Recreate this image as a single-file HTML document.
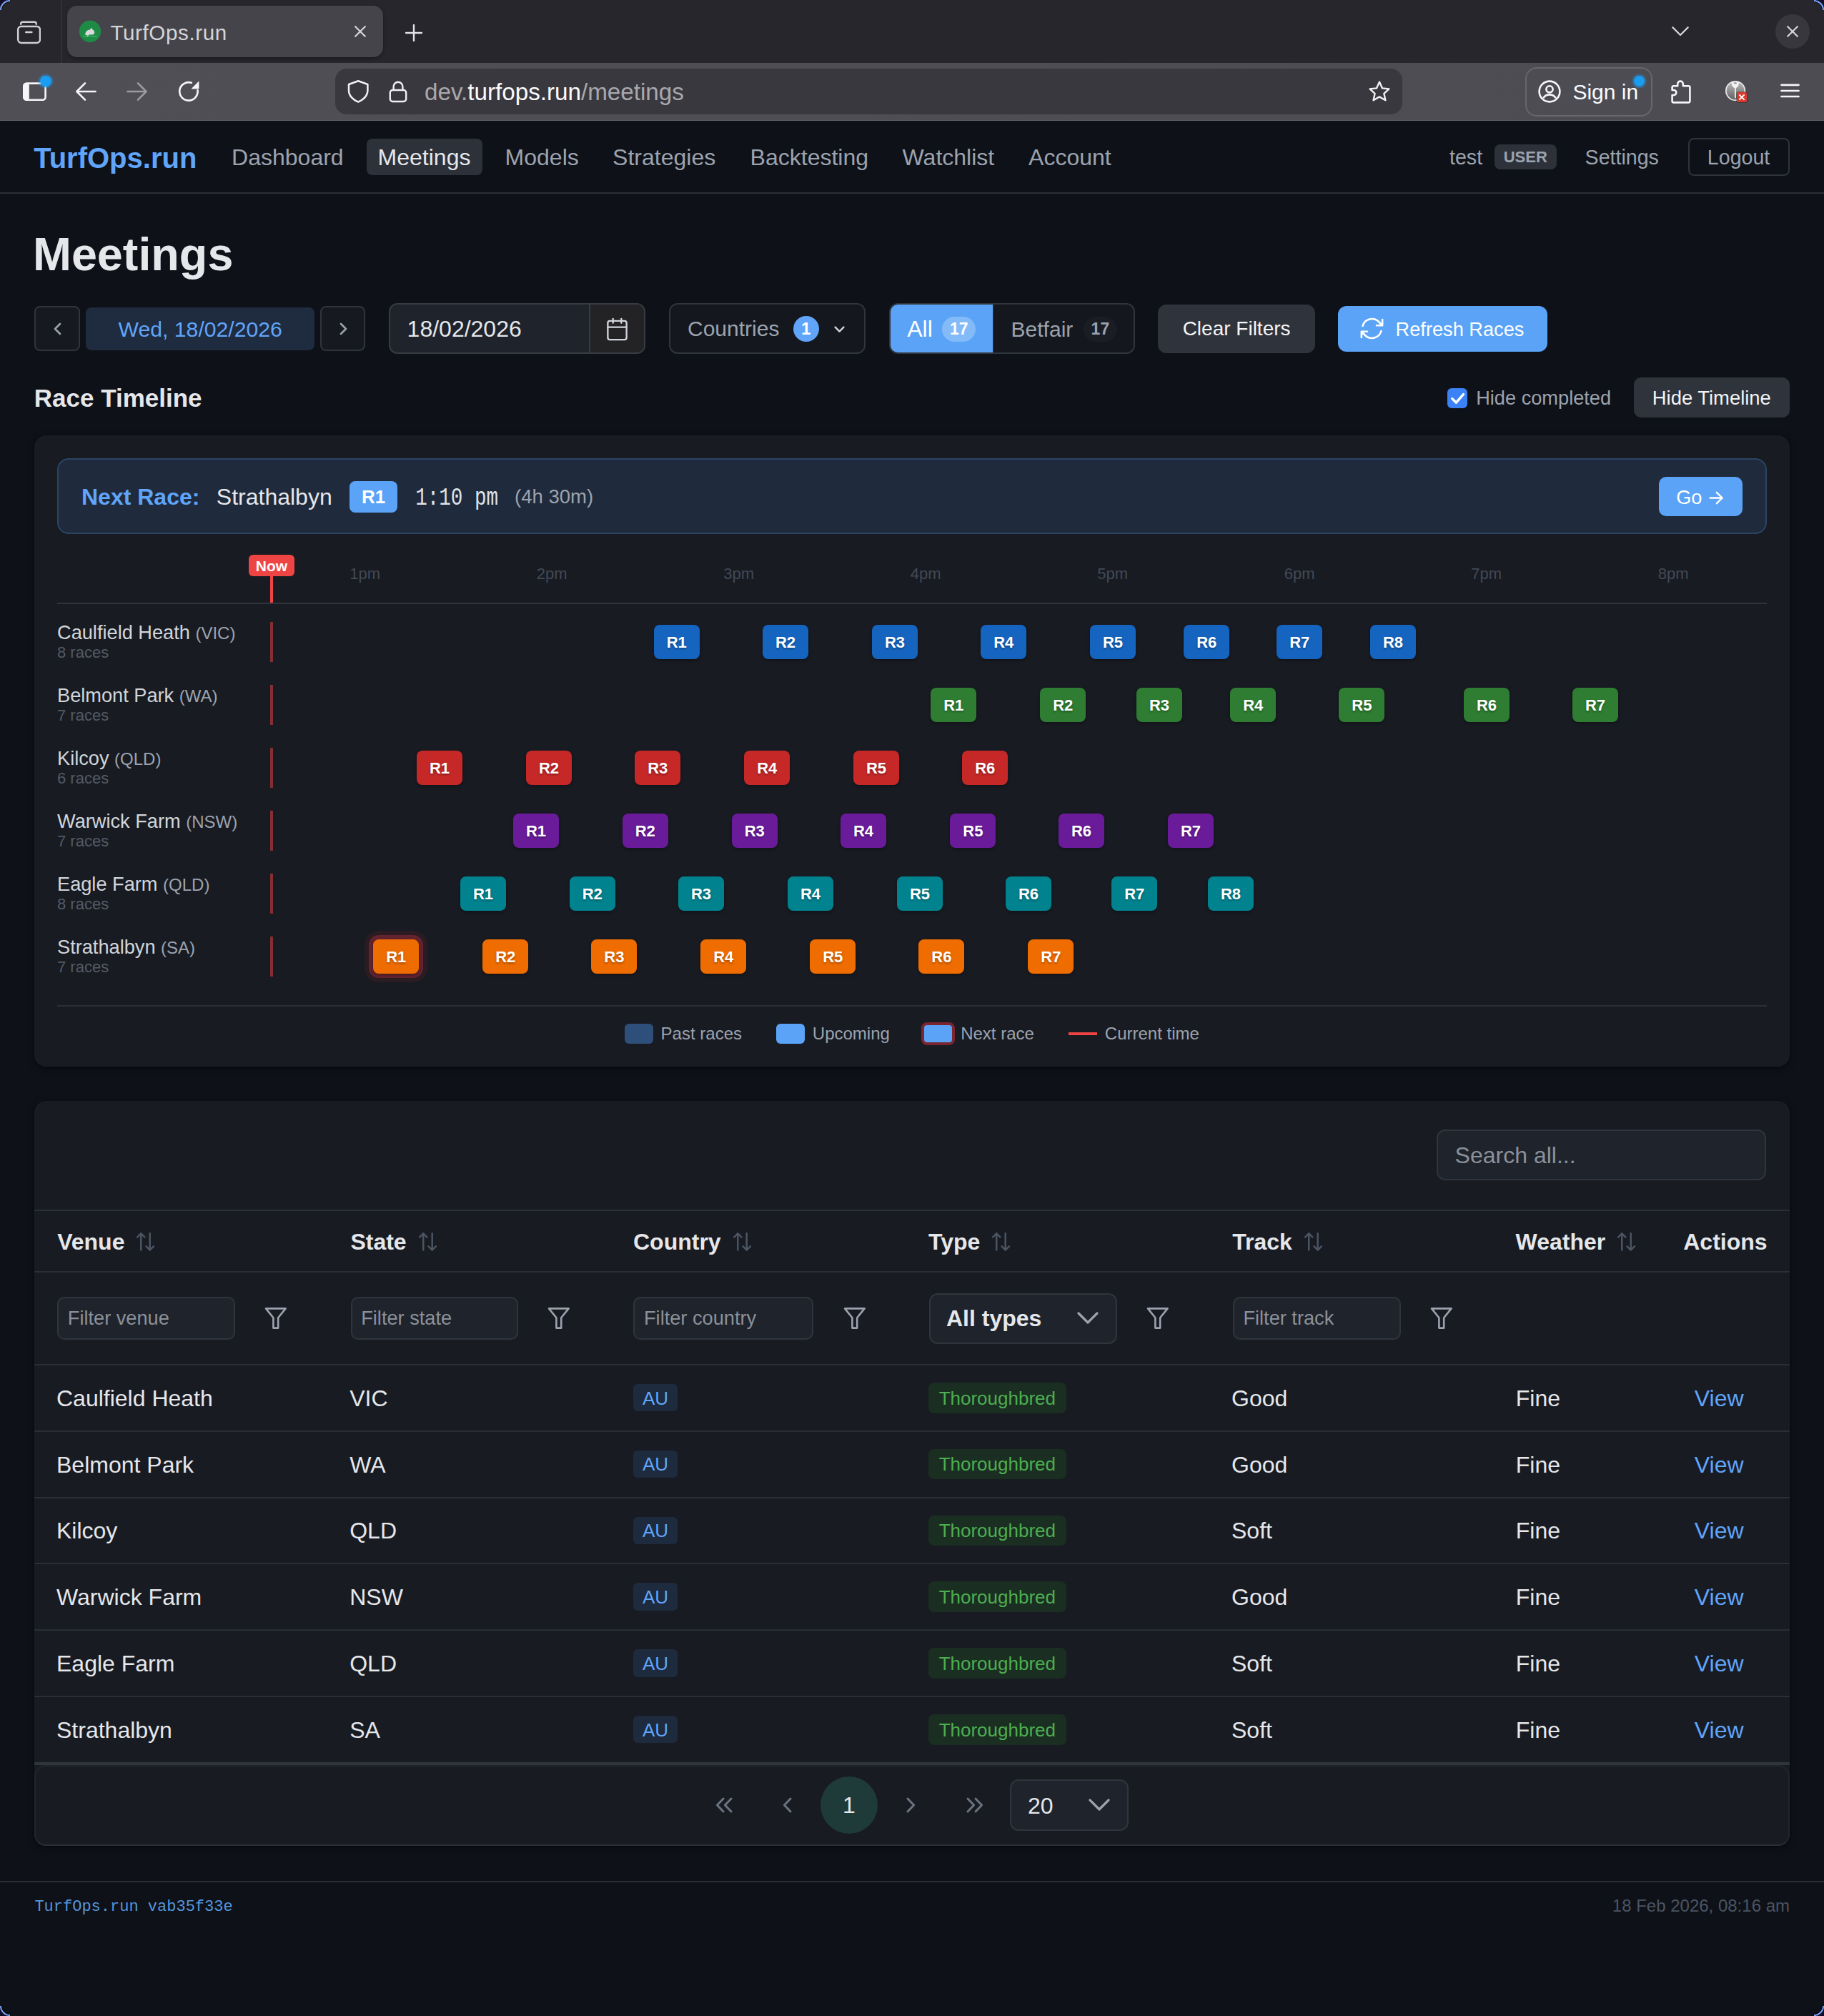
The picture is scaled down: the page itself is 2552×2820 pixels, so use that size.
<!DOCTYPE html><html><head><meta charset="utf-8"><title>TurfOps.run</title><style>
html{zoom:1;background:#0e1118;}
@media (min-width:1900px){html{zoom:2;}}
*{box-sizing:border-box;}
body{margin:0;width:1276px;height:1410px;overflow:hidden;background:#0e1118;font-family:"Liberation Sans",sans-serif;position:relative;}
.t{position:absolute;white-space:pre;}
.b{position:absolute;}
</style></head><body>
<div class="b" style="left:0.00px;top:0.00px;width:1276.00px;height:44.00px;background:#27262c;"></div>
<div class="b" style="left:0.00px;top:44.00px;width:1276.00px;height:40.50px;background:linear-gradient(90deg,#504f56,#4e4d54 60%,#4d4c53);"></div>
<div class="b" style="left:0.00px;top:84.00px;width:1276.00px;height:0.50px;background:#5e5d63;"></div>
<svg class="b" style="left:11.50px;top:14.00px;" width="17" height="17" viewBox="0 0 17 17" fill="none"><rect x="1.1" y="4.45" width="15.4" height="11.5" rx="2.3" stroke="#cfcfd3" stroke-width="1.25"/><path d="M3.1 2.9v-.2c0-.8.6-1.3 1.4-1.3h8c.8 0 1.4.5 1.4 1.3v.2" stroke="#cfcfd3" stroke-width="1.25" stroke-linecap="round"/><path d="M6.6 8.45h4.1" stroke="#cfcfd3" stroke-width="1.25" stroke-linecap="round"/></svg>
<div class="b" style="left:42.25px;top:0.00px;width:0.50px;height:44.00px;background:#3e3d43;"></div>
<div class="b" style="left:47.00px;top:4.00px;width:221.00px;height:36.00px;background:#45444b;border-radius:7px;box-shadow:0 1px 2px rgba(0,0,0,.35);"></div>
<svg class="b" style="left:55.00px;top:14.00px;" width="16" height="16" viewBox="0 0 16 16" fill="none"><circle cx="8" cy="8" r="7.6" fill="#1e8a45"/><path d="M4.6 10.4c0-2.3 1.5-3.6 3.4-3.7l.9-1.5.6 1.3c1 .4 1.6 1.3 1.6 2.3 0 .9-.6 1.5-1.5 1.5H7.2c-.4.4-.7.9-.7 1.6H5.8c0-.6.2-1 .4-1.3z" fill="#d9d9dc"/><path d="M3 11.3h10" stroke="#3fbf6a" stroke-width=".6"/></svg>
<div class="t" style="left:77.20px;top:15.47px;font-size:14.8px;line-height:14.8px;color:#d4d4d8;font-weight:400;font-family:'Liberation Sans', sans-serif;letter-spacing:0.3px;">TurfOps.run</div>
<svg class="b" style="left:248.00px;top:18.00px;" width="8" height="8" viewBox="0 0 8 8" fill="none"><path d="M.6.6l6.8 6.8M7.4.6L.6 7.4" stroke="#d6d6da" stroke-width="1.1" stroke-linecap="round"/></svg>
<svg class="b" style="left:283.50px;top:16.80px;" width="12" height="12" viewBox="0 0 12 12" fill="none"><path d="M6 .5v11M.5 6h11" stroke="#e3e3e7" stroke-width="1.2" stroke-linecap="round"/></svg>
<svg class="b" style="left:1169.50px;top:18.50px;" width="12" height="7" viewBox="0 0 12 7" fill="none"><path d="M.7.7L6 6l5.3-5.3" stroke="#d6d6da" stroke-width="1.1" stroke-linecap="round"/></svg>
<div class="b" style="left:1242.00px;top:10.00px;width:24.00px;height:24.00px;background:#38373d;border-radius:50%;"></div>
<svg class="b" style="left:1250.00px;top:18.00px;" width="8" height="8" viewBox="0 0 8 8" fill="none"><path d="M.6.6l6.8 6.8M7.4.6L.6 7.4" stroke="#d6d6da" stroke-width="1.1" stroke-linecap="round"/></svg>
<svg class="b" style="left:16.00px;top:56.50px;" width="17" height="14" viewBox="0 0 17 14" fill="none"><rect x="0.6" y="1.8" width="15.2" height="11.6" rx="2" fill="none" stroke="#f6f6f8" stroke-width="1.3"/><rect x="0.6" y="1.8" width="3.8" height="11.6" rx="1.5" fill="#f6f6f8"/></svg>
<div class="b" style="left:28.20px;top:53.00px;width:7.60px;height:7.60px;background:#1a9cf0;border-radius:50%;box-shadow:0 0 0 1.3px rgba(26,156,240,.35);"></div>
<svg class="b" style="left:52.50px;top:57.00px;" width="15" height="14" viewBox="0 0 15 14" fill="none"><path d="M14.3 7H1.2M7 1.2L1.2 7 7 12.8" stroke="#f6f6f8" stroke-width="1.3" stroke-linecap="round" stroke-linejoin="round"/></svg>
<svg class="b" style="left:88.50px;top:57.00px;" width="15" height="14" viewBox="0 0 15 14" fill="none"><path d="M.7 7h13.1M8 1.2L13.8 7 8 12.8" stroke="#9c9ba0" stroke-width="1.3" stroke-linecap="round" stroke-linejoin="round"/></svg>
<svg class="b" style="left:124.50px;top:56.50px;" width="15" height="15" viewBox="0 0 15 15" fill="none"><path d="M13.75 6.6A6.35 6.35 0 1 1 9.4 1.4" stroke="#f6f6f8" stroke-width="1.3" stroke-linecap="round"/><path d="M9.6 5.5H14.5V.6z" fill="#f6f6f8" stroke="#f6f6f8" stroke-width=".4" stroke-linejoin="round"/></svg>
<div class="b" style="left:234.60px;top:48.10px;width:746.30px;height:31.80px;background:#39383e;border-radius:8px;"></div>
<svg class="b" style="left:242.40px;top:55.60px;" width="16.2" height="17" viewBox="0 0 16.2 17" fill="none"><path d="M8.1 1.1L1.5 3.5v4.2c0 3.6 2.9 6.6 6.6 8.1 3.7-1.5 6.6-4.5 6.6-8.1V3.5z" stroke="#f1f1f3" stroke-width="1.25" stroke-linejoin="round"/></svg>
<svg class="b" style="left:272.00px;top:56.00px;" width="13" height="16" viewBox="0 0 13 16" fill="none"><rect x="0.9" y="7" width="11.2" height="8" rx="1.8" stroke="#f1f1f3" stroke-width="1.2"/><path d="M3.3 7V4.6a3.2 3.2 0 0 1 6.4 0V7" stroke="#f1f1f3" stroke-width="1.2"/></svg>
<div class="t" style="left:297px;top:55.7px;font-size:16.6px;line-height:18px;color:#a8a8ad;font-family:'Liberation Sans',sans-serif;">dev.<span style="color:#fbfbfe">turfops.run</span>/meetings</div>
<svg class="b" style="left:957.00px;top:56.00px;" width="16" height="16" viewBox="0 0 16 16" fill="none"><path d="M8 1.3l2 4.4 4.7.5-3.5 3.2 1 4.7L8 11.7l-4.2 2.4 1-4.7L1.3 6.2 6 5.7z" stroke="#f1f1f3" stroke-width="1.2" stroke-linejoin="round"/></svg>
<div class="b" style="left:1067.10px;top:46.80px;width:88.80px;height:34.60px;border:1px solid #67666c;border-radius:8px;"></div>
<svg class="b" style="left:1076.00px;top:56.00px;" width="16" height="16" viewBox="0 0 16 16" fill="none"><circle cx="8" cy="8" r="7.2" stroke="#f6f6f8" stroke-width="1.3"/><circle cx="8" cy="6.4" r="2.3" stroke="#f6f6f8" stroke-width="1.3"/><path d="M3.6 12.6c1-1.5 2.6-2.4 4.4-2.4s3.4.9 4.4 2.4" stroke="#f6f6f8" stroke-width="1.3"/></svg>
<div class="t" style="left:1100.20px;top:57.00px;font-size:15px;line-height:15px;color:#fbfbfe;font-weight:400;font-family:'Liberation Sans', sans-serif;">Sign in</div>
<div class="b" style="left:1143.20px;top:52.90px;width:7.40px;height:7.40px;background:#1a9cf0;border-radius:50%;box-shadow:0 0 0 1.3px rgba(26,156,240,.35);"></div>
<svg class="b" style="left:1169.20px;top:55.30px;" width="15" height="17.5" viewBox="0 0 15 17.5" fill="none"><path d="M4.6 4.6V3.2a1.9 1.9 0 0 1 3.8 0V4.6H12.2a1 1 0 0 1 1 1V15.2a1 1 0 0 1-1 1H1.8a1 1 0 0 1-1-1V11H1.9a1.75 1.75 0 0 0 0-3.5H.8V5.6a1 1 0 0 1 1-1z" stroke="#f6f6f8" stroke-width="1.3" stroke-linejoin="round"/></svg>
<svg class="b" style="left:1206.50px;top:56.20px;" width="16" height="16" viewBox="0 0 16 16" fill="none"><defs><linearGradient id="kg" x1="0" y1="0" x2="0" y2="1"><stop offset="0" stop-color="#bdbdbd"/><stop offset="1" stop-color="#5e5e5e"/></linearGradient></defs><circle cx="7.55" cy="7.5" r="6.6" fill="url(#kg)" stroke="#e6e6e6" stroke-width="0.9"/><path d="M4.9 1.3h5c.3 2-.5 3.6-2 4.3V12.6H7V5.6C5.4 4.9 4.6 3.3 4.9 1.3z" fill="#f4f4f4"/><ellipse cx="7.4" cy="2.1" rx="1" ry=".6" fill="#9a9a9a"/></svg>
<div class="b" style="left:1214.80px;top:64.70px;width:7.00px;height:7.00px;background:#d93a2e;border-radius:1px;box-shadow:0 0 0 .5px rgba(0,0,0,.25);"></div>
<svg class="b" style="left:1215.80px;top:65.70px;" width="5" height="5" viewBox="0 0 5 5" fill="none"><path d="M.7.7l3.6 3.6M4.3.7L.7 4.3" stroke="#fff" stroke-width="1"/></svg>
<svg class="b" style="left:1245.30px;top:58.20px;" width="13.5" height="11" viewBox="0 0 13.5 11" fill="none"><path d="M.75 1.4h12M.75 5.5h12M.75 9.5h12" stroke="#f6f6f8" stroke-width="1.35" stroke-linecap="round"/></svg>
<div class="b" style="left:0.00px;top:84.50px;width:1276.00px;height:51.00px;background:#0e1118;border-bottom:1px solid #2a2e36;"></div>
<div class="t" style="left:23.60px;top:100.32px;font-size:20px;line-height:20px;color:#60a5fa;font-weight:700;font-family:'Liberation Sans', sans-serif;">TurfOps.run</div>
<div class="b" style="left:256.50px;top:97.00px;width:81.00px;height:25.50px;background:#2d3139;border-radius:4px;"></div>
<div class="t" style="left:162.05px;top:102.11px;font-size:16px;line-height:16px;color:#9ca3af;font-weight:400;font-family:'Liberation Sans', sans-serif;">Dashboard</div>
<div class="t" style="left:264.30px;top:102.11px;font-size:16px;line-height:16px;color:#e5e7eb;font-weight:400;font-family:'Liberation Sans', sans-serif;">Meetings</div>
<div class="t" style="left:353.30px;top:102.11px;font-size:16px;line-height:16px;color:#9ca3af;font-weight:400;font-family:'Liberation Sans', sans-serif;">Models</div>
<div class="t" style="left:428.55px;top:102.11px;font-size:16px;line-height:16px;color:#9ca3af;font-weight:400;font-family:'Liberation Sans', sans-serif;">Strategies</div>
<div class="t" style="left:524.80px;top:102.11px;font-size:16px;line-height:16px;color:#9ca3af;font-weight:400;font-family:'Liberation Sans', sans-serif;">Backtesting</div>
<div class="t" style="left:631.30px;top:102.11px;font-size:16px;line-height:16px;color:#9ca3af;font-weight:400;font-family:'Liberation Sans', sans-serif;">Watchlist</div>
<div class="t" style="left:719.55px;top:102.11px;font-size:16px;line-height:16px;color:#9ca3af;font-weight:400;font-family:'Liberation Sans', sans-serif;">Account</div>
<div class="t" style="left:1014.00px;top:103.20px;font-size:14.3px;line-height:14.3px;color:#9ca3af;font-weight:400;font-family:'Liberation Sans', sans-serif;">test</div>
<div class="b" style="left:1045.40px;top:101.00px;width:43.50px;height:17.30px;background:#2d3139;border-radius:4px;"></div>
<div class="t" style="left:867.15px;width:400px;text-align:center;top:104.49px;font-size:11px;line-height:11px;color:#9ca3af;font-weight:700;font-family:'Liberation Sans', sans-serif;">USER</div>
<div class="t" style="left:1108.80px;top:103.20px;font-size:14.3px;line-height:14.3px;color:#9ca3af;font-weight:400;font-family:'Liberation Sans', sans-serif;">Settings</div>
<div class="b" style="left:1181.00px;top:96.70px;width:71.10px;height:26.30px;border:1px solid #2f333b;border-radius:4px;"></div>
<div class="t" style="left:1016.30px;width:400px;text-align:center;top:103.20px;font-size:14.3px;line-height:14.3px;color:#9ca3af;font-weight:400;font-family:'Liberation Sans', sans-serif;">Logout</div>
<div class="t" style="left:23.00px;top:162.12px;font-size:32.35px;line-height:32.35px;color:#e5e7eb;font-weight:700;font-family:'Liberation Sans', sans-serif;">Meetings</div>
<div class="b" style="left:24.20px;top:214.00px;width:31.70px;height:31.70px;background:#16191f;border:1px solid #30343c;border-radius:4px;"></div>
<svg class="b" style="left:36.80px;top:225.30px;" width="6.5" height="9" viewBox="0 0 6.5 9" fill="none"><path d="M5 1L1.5 4.5 5 8" stroke="#9ca3af" stroke-width="1.3" stroke-linecap="round" stroke-linejoin="round"/></svg>
<div class="b" style="left:60.10px;top:215.00px;width:160.00px;height:30.00px;background:#1f2b3e;border-radius:4px;"></div>
<div class="t" style="left:-59.90px;width:400px;text-align:center;top:222.87px;font-size:15.1px;line-height:15.1px;color:#60a5fa;font-weight:400;font-family:'Liberation Sans', sans-serif;">Wed, 18/02/2026</div>
<div class="b" style="left:224.00px;top:214.00px;width:31.70px;height:31.70px;background:#16191f;border:1px solid #30343c;border-radius:4px;"></div>
<svg class="b" style="left:237.10px;top:225.30px;" width="6.5" height="9" viewBox="0 0 6.5 9" fill="none"><path d="M1.5 1L5 4.5 1.5 8" stroke="#9ca3af" stroke-width="1.3" stroke-linecap="round" stroke-linejoin="round"/></svg>
<div class="b" style="left:272.10px;top:212.10px;width:179.60px;height:35.50px;background:#1f232b;border:1px solid #363b44;border-radius:6px;overflow:hidden;"></div>
<div class="b" style="left:411.80px;top:213.10px;width:38.90px;height:33.50px;background:#232326;border-left:1px solid #363b44;border-radius:0 5px 5px 0;"></div>
<svg class="b" style="left:422.85px;top:221.35px;" width="17.5" height="17.5" viewBox="0 0 24 24" fill="none"><rect x="3" y="4" width="18" height="18" rx="2" stroke="#d1d5db" stroke-width="1.6"/><path d="M16 2v4M8 2v4M3 10h18" stroke="#d1d5db" stroke-width="1.6" stroke-linecap="round"/></svg>
<div class="t" style="left:284.80px;top:222.16px;font-size:16px;line-height:16px;color:#e5e7eb;font-weight:400;font-family:'Liberation Sans', sans-serif;">18/02/2026</div>
<div class="b" style="left:468.20px;top:212.10px;width:137.50px;height:35.50px;background:#14171d;border:1px solid #30343c;border-radius:6px;"></div>
<div class="t" style="left:481.00px;top:222.70px;font-size:15px;line-height:15px;color:#9ca3af;font-weight:400;font-family:'Liberation Sans', sans-serif;">Countries</div>
<div class="b" style="left:554.90px;top:221.00px;width:18.00px;height:18.00px;background:#60a5fa;border-radius:50%;"></div>
<div class="t" style="left:363.90px;width:400px;text-align:center;top:224.14px;font-size:12px;line-height:12px;color:#ffffff;font-weight:700;font-family:'Liberation Sans', sans-serif;">1</div>
<svg class="b" style="left:583.30px;top:227.80px;" width="7.5" height="5" viewBox="0 0 7.5 5" fill="none"><path d="M.8.8L3.75 3.8 6.7.8" stroke="#d1d5db" stroke-width="1.2" stroke-linecap="round" stroke-linejoin="round"/></svg>
<div class="b" style="left:622.10px;top:212.10px;width:171.70px;height:35.50px;background:#14171d;border:1px solid #30343c;border-radius:6px;"></div>
<div class="b" style="left:623.10px;top:213.10px;width:71.50px;height:33.50px;background:#5aa3f6;border-radius:5px 0 0 5px;"></div>
<div class="b" style="left:694.60px;top:213.10px;width:0.50px;height:33.50px;background:#30343c;"></div>
<div class="t" style="left:634.60px;top:222.06px;font-size:16px;line-height:16px;color:#ffffff;font-weight:400;font-family:'Liberation Sans', sans-serif;">All</div>
<div class="b" style="left:659.20px;top:221.30px;width:23.40px;height:17.70px;background:rgba(255,255,255,.25);border-radius:9px;"></div>
<div class="t" style="left:470.90px;width:400px;text-align:center;top:224.27px;font-size:11.5px;line-height:11.5px;color:#ffffff;font-weight:700;font-family:'Liberation Sans', sans-serif;">17</div>
<div class="t" style="left:707.30px;top:222.80px;font-size:15px;line-height:15px;color:#9ca3af;font-weight:400;font-family:'Liberation Sans', sans-serif;">Betfair</div>
<div class="b" style="left:758.00px;top:221.30px;width:23.40px;height:17.70px;background:#1a1d23;border-radius:9px;"></div>
<div class="t" style="left:569.70px;width:400px;text-align:center;top:224.27px;font-size:11.5px;line-height:11.5px;color:#9ca3af;font-weight:700;font-family:'Liberation Sans', sans-serif;">17</div>
<div class="b" style="left:810.20px;top:213.10px;width:109.70px;height:33.70px;background:#2f333b;border-radius:6px;"></div>
<div class="t" style="left:665.05px;width:400px;text-align:center;top:223.15px;font-size:14px;line-height:14px;color:#f3f4f6;font-weight:400;font-family:'Liberation Sans', sans-serif;">Clear Filters</div>
<div class="b" style="left:936.00px;top:214.00px;width:146.50px;height:31.80px;background:#5aa3f6;border-radius:6px;"></div>
<svg class="b" style="left:950.15px;top:220.20px;" width="19.5" height="19.5" viewBox="0 0 24 24" fill="none"><path d="M16.023 9.348h4.992v-.001M2.985 19.644v-4.992m0 0h4.992m-4.993 0 3.181 3.183a8.25 8.25 0 0 0 13.803-3.7M4.031 9.865a8.25 8.25 0 0 1 13.803-3.7l3.181 3.182m0-4.991v4.99" stroke="#fff" stroke-width="1.6" stroke-linecap="round" stroke-linejoin="round"/></svg>
<div class="t" style="left:976.30px;top:223.49px;font-size:13.6px;line-height:13.6px;color:#ffffff;font-weight:400;font-family:'Liberation Sans', sans-serif;">Refresh Races</div>
<div class="t" style="left:23.90px;top:269.49px;font-size:17.5px;line-height:17.5px;color:#e5e7eb;font-weight:700;font-family:'Liberation Sans', sans-serif;">Race Timeline</div>
<div class="b" style="left:1012.60px;top:271.60px;width:13.80px;height:13.80px;background:#3b82f6;border-radius:3px;"></div>
<svg class="b" style="left:1014.30px;top:273.80px;" width="10.5" height="9.5" viewBox="0 0 10.5 9.5" fill="none"><path d="M1.4 4.8l2.8 2.8L9.2 1.8" stroke="#fff" stroke-width="1.7" stroke-linecap="round" stroke-linejoin="round"/></svg>
<div class="t" style="left:1032.60px;top:271.44px;font-size:13.6px;line-height:13.6px;color:#9ca3af;font-weight:400;font-family:'Liberation Sans', sans-serif;">Hide completed</div>
<div class="b" style="left:1143.00px;top:264.10px;width:108.80px;height:28.10px;background:#2f333b;border-radius:5px;"></div>
<div class="t" style="left:997.40px;width:400px;text-align:center;top:271.40px;font-size:13.7px;line-height:13.7px;color:#f3f4f6;font-weight:400;font-family:'Liberation Sans', sans-serif;">Hide Timeline</div>
<div class="b" style="left:24.00px;top:304.60px;width:1228.00px;height:441.30px;background:#181b22;border-radius:8px;box-shadow:0 1px 4px rgba(0,0,0,.55);"></div>
<div class="b" style="left:40.10px;top:320.60px;width:1195.80px;height:53.10px;background:#1f2a3c;border:1px solid #2b4566;border-radius:8px;"></div>
<div class="t" style="left:57.00px;top:339.71px;font-size:16px;line-height:16px;color:#60a5fa;font-weight:700;font-family:'Liberation Sans', sans-serif;">Next Race:</div>
<div class="t" style="left:151.40px;top:339.71px;font-size:16px;line-height:16px;color:#e5e7eb;font-weight:400;font-family:'Liberation Sans', sans-serif;">Strathalbyn</div>
<div class="b" style="left:244.60px;top:336.40px;width:33.30px;height:22.00px;background:#5aa3f6;border-radius:4px;"></div>
<div class="t" style="left:61.25px;width:400px;text-align:center;top:341.00px;font-size:13px;line-height:13px;color:#ffffff;font-weight:700;font-family:'Liberation Sans', sans-serif;">R1</div>
<div class="t" style="left:290.60px;top:342.82px;font-size:13.8px;line-height:13.8px;color:#dfe2e7;font-weight:400;font-family:'Liberation Mono', monospace;transform:scaleY(1.25);transform-origin:0 84.65%;">1:10 pm</div>
<div class="t" style="left:360.00px;top:340.66px;font-size:13.75px;line-height:13.75px;color:#9ca3af;font-weight:400;font-family:'Liberation Sans', sans-serif;">(4h 30m)</div>
<div class="b" style="left:1160.50px;top:333.60px;width:58.50px;height:27.40px;background:#5aa3f6;border-radius:5px;"></div>
<div class="t" style="left:1172.60px;top:340.84px;font-size:13.6px;line-height:13.6px;color:#ffffff;font-weight:400;font-family:'Liberation Sans', sans-serif;">Go</div>
<svg class="b" style="left:1195.50px;top:343.30px;" width="10.5" height="9.5" viewBox="0 0 10.5 9.5" fill="none"><path d="M.8 4.75h8.6M5.4.9l3.9 3.85-3.9 3.85" stroke="#fff" stroke-width="1.2" stroke-linecap="round" stroke-linejoin="round"/></svg>
<div class="b" style="left:174.00px;top:388.00px;width:32.00px;height:15.00px;background:#ef4444;border-radius:3px;"></div>
<div class="t" style="left:-10.00px;width:400px;text-align:center;top:390.71px;font-size:10.5px;line-height:10.5px;color:#ffffff;font-weight:700;font-family:'Liberation Sans', sans-serif;">Now</div>
<div class="b" style="left:189.00px;top:403.00px;width:2.00px;height:19.30px;background:#ef4444;"></div>
<div class="t" style="left:55.38px;width:400px;text-align:center;top:395.89px;font-size:11px;line-height:11px;color:#434955;font-weight:400;font-family:'Liberation Sans', sans-serif;">1pm</div>
<div class="t" style="left:186.12px;width:400px;text-align:center;top:395.89px;font-size:11px;line-height:11px;color:#434955;font-weight:400;font-family:'Liberation Sans', sans-serif;">2pm</div>
<div class="t" style="left:316.88px;width:400px;text-align:center;top:395.89px;font-size:11px;line-height:11px;color:#434955;font-weight:400;font-family:'Liberation Sans', sans-serif;">3pm</div>
<div class="t" style="left:447.62px;width:400px;text-align:center;top:395.89px;font-size:11px;line-height:11px;color:#434955;font-weight:400;font-family:'Liberation Sans', sans-serif;">4pm</div>
<div class="t" style="left:578.38px;width:400px;text-align:center;top:395.89px;font-size:11px;line-height:11px;color:#434955;font-weight:400;font-family:'Liberation Sans', sans-serif;">5pm</div>
<div class="t" style="left:709.12px;width:400px;text-align:center;top:395.89px;font-size:11px;line-height:11px;color:#434955;font-weight:400;font-family:'Liberation Sans', sans-serif;">6pm</div>
<div class="t" style="left:839.88px;width:400px;text-align:center;top:395.89px;font-size:11px;line-height:11px;color:#434955;font-weight:400;font-family:'Liberation Sans', sans-serif;">7pm</div>
<div class="t" style="left:970.62px;width:400px;text-align:center;top:395.89px;font-size:11px;line-height:11px;color:#434955;font-weight:400;font-family:'Liberation Sans', sans-serif;">8pm</div>
<div class="b" style="left:40.00px;top:421.70px;width:1196.00px;height:1.00px;background:#30343c;"></div>
<div class="t" style="left:40.0px;top:435.44px;font-size:13.6px;line-height:13.6px;color:#d1d5db;">Caulfield Heath <span style="font-size:12px;color:#9ca3af">(VIC)</span></div>
<div class="t" style="left:40.00px;top:451.09px;font-size:11px;line-height:11px;color:#545a65;font-weight:400;font-family:'Liberation Sans', sans-serif;">8 races</div>
<div class="b" style="left:189.00px;top:435.00px;width:2.00px;height:28.00px;background:rgba(239,68,68,.5);"></div>
<div class="b" style="left:457.40px;top:437.00px;width:32.00px;height:24.00px;background:#1565c0;border-radius:4px;box-shadow:0 1px 2px rgba(0,0,0,.3);"></div>
<div class="t" style="left:273.40px;width:400px;text-align:center;top:443.89px;font-size:11px;line-height:11px;color:#ffffff;font-weight:700;font-family:'Liberation Sans', sans-serif;text-shadow:0 1px 1.5px rgba(0,0,0,.3);">R1</div>
<div class="b" style="left:533.50px;top:437.00px;width:32.00px;height:24.00px;background:#1565c0;border-radius:4px;box-shadow:0 1px 2px rgba(0,0,0,.3);"></div>
<div class="t" style="left:349.50px;width:400px;text-align:center;top:443.89px;font-size:11px;line-height:11px;color:#ffffff;font-weight:700;font-family:'Liberation Sans', sans-serif;text-shadow:0 1px 1.5px rgba(0,0,0,.3);">R2</div>
<div class="b" style="left:610.00px;top:437.00px;width:32.00px;height:24.00px;background:#1565c0;border-radius:4px;box-shadow:0 1px 2px rgba(0,0,0,.3);"></div>
<div class="t" style="left:426.00px;width:400px;text-align:center;top:443.89px;font-size:11px;line-height:11px;color:#ffffff;font-weight:700;font-family:'Liberation Sans', sans-serif;text-shadow:0 1px 1.5px rgba(0,0,0,.3);">R3</div>
<div class="b" style="left:686.10px;top:437.00px;width:32.00px;height:24.00px;background:#1565c0;border-radius:4px;box-shadow:0 1px 2px rgba(0,0,0,.3);"></div>
<div class="t" style="left:502.10px;width:400px;text-align:center;top:443.89px;font-size:11px;line-height:11px;color:#ffffff;font-weight:700;font-family:'Liberation Sans', sans-serif;text-shadow:0 1px 1.5px rgba(0,0,0,.3);">R4</div>
<div class="b" style="left:762.50px;top:437.00px;width:32.00px;height:24.00px;background:#1565c0;border-radius:4px;box-shadow:0 1px 2px rgba(0,0,0,.3);"></div>
<div class="t" style="left:578.50px;width:400px;text-align:center;top:443.89px;font-size:11px;line-height:11px;color:#ffffff;font-weight:700;font-family:'Liberation Sans', sans-serif;text-shadow:0 1px 1.5px rgba(0,0,0,.3);">R5</div>
<div class="b" style="left:828.10px;top:437.00px;width:32.00px;height:24.00px;background:#1565c0;border-radius:4px;box-shadow:0 1px 2px rgba(0,0,0,.3);"></div>
<div class="t" style="left:644.10px;width:400px;text-align:center;top:443.89px;font-size:11px;line-height:11px;color:#ffffff;font-weight:700;font-family:'Liberation Sans', sans-serif;text-shadow:0 1px 1.5px rgba(0,0,0,.3);">R6</div>
<div class="b" style="left:893.10px;top:437.00px;width:32.00px;height:24.00px;background:#1565c0;border-radius:4px;box-shadow:0 1px 2px rgba(0,0,0,.3);"></div>
<div class="t" style="left:709.10px;width:400px;text-align:center;top:443.89px;font-size:11px;line-height:11px;color:#ffffff;font-weight:700;font-family:'Liberation Sans', sans-serif;text-shadow:0 1px 1.5px rgba(0,0,0,.3);">R7</div>
<div class="b" style="left:958.50px;top:437.00px;width:32.00px;height:24.00px;background:#1565c0;border-radius:4px;box-shadow:0 1px 2px rgba(0,0,0,.3);"></div>
<div class="t" style="left:774.50px;width:400px;text-align:center;top:443.89px;font-size:11px;line-height:11px;color:#ffffff;font-weight:700;font-family:'Liberation Sans', sans-serif;text-shadow:0 1px 1.5px rgba(0,0,0,.3);">R8</div>
<div class="t" style="left:40.0px;top:479.44px;font-size:13.6px;line-height:13.6px;color:#d1d5db;">Belmont Park <span style="font-size:12px;color:#9ca3af">(WA)</span></div>
<div class="t" style="left:40.00px;top:495.09px;font-size:11px;line-height:11px;color:#545a65;font-weight:400;font-family:'Liberation Sans', sans-serif;">7 races</div>
<div class="b" style="left:189.00px;top:479.00px;width:2.00px;height:28.00px;background:rgba(239,68,68,.5);"></div>
<div class="b" style="left:651.10px;top:481.00px;width:32.00px;height:24.00px;background:#2e7d32;border-radius:4px;box-shadow:0 1px 2px rgba(0,0,0,.3);"></div>
<div class="t" style="left:467.10px;width:400px;text-align:center;top:487.89px;font-size:11px;line-height:11px;color:#ffffff;font-weight:700;font-family:'Liberation Sans', sans-serif;text-shadow:0 1px 1.5px rgba(0,0,0,.3);">R1</div>
<div class="b" style="left:727.60px;top:481.00px;width:32.00px;height:24.00px;background:#2e7d32;border-radius:4px;box-shadow:0 1px 2px rgba(0,0,0,.3);"></div>
<div class="t" style="left:543.60px;width:400px;text-align:center;top:487.89px;font-size:11px;line-height:11px;color:#ffffff;font-weight:700;font-family:'Liberation Sans', sans-serif;text-shadow:0 1px 1.5px rgba(0,0,0,.3);">R2</div>
<div class="b" style="left:795.00px;top:481.00px;width:32.00px;height:24.00px;background:#2e7d32;border-radius:4px;box-shadow:0 1px 2px rgba(0,0,0,.3);"></div>
<div class="t" style="left:611.00px;width:400px;text-align:center;top:487.89px;font-size:11px;line-height:11px;color:#ffffff;font-weight:700;font-family:'Liberation Sans', sans-serif;text-shadow:0 1px 1.5px rgba(0,0,0,.3);">R3</div>
<div class="b" style="left:860.60px;top:481.00px;width:32.00px;height:24.00px;background:#2e7d32;border-radius:4px;box-shadow:0 1px 2px rgba(0,0,0,.3);"></div>
<div class="t" style="left:676.60px;width:400px;text-align:center;top:487.89px;font-size:11px;line-height:11px;color:#ffffff;font-weight:700;font-family:'Liberation Sans', sans-serif;text-shadow:0 1px 1.5px rgba(0,0,0,.3);">R4</div>
<div class="b" style="left:936.70px;top:481.00px;width:32.00px;height:24.00px;background:#2e7d32;border-radius:4px;box-shadow:0 1px 2px rgba(0,0,0,.3);"></div>
<div class="t" style="left:752.70px;width:400px;text-align:center;top:487.89px;font-size:11px;line-height:11px;color:#ffffff;font-weight:700;font-family:'Liberation Sans', sans-serif;text-shadow:0 1px 1.5px rgba(0,0,0,.3);">R5</div>
<div class="b" style="left:1024.00px;top:481.00px;width:32.00px;height:24.00px;background:#2e7d32;border-radius:4px;box-shadow:0 1px 2px rgba(0,0,0,.3);"></div>
<div class="t" style="left:840.00px;width:400px;text-align:center;top:487.89px;font-size:11px;line-height:11px;color:#ffffff;font-weight:700;font-family:'Liberation Sans', sans-serif;text-shadow:0 1px 1.5px rgba(0,0,0,.3);">R6</div>
<div class="b" style="left:1100.00px;top:481.00px;width:32.00px;height:24.00px;background:#2e7d32;border-radius:4px;box-shadow:0 1px 2px rgba(0,0,0,.3);"></div>
<div class="t" style="left:916.00px;width:400px;text-align:center;top:487.89px;font-size:11px;line-height:11px;color:#ffffff;font-weight:700;font-family:'Liberation Sans', sans-serif;text-shadow:0 1px 1.5px rgba(0,0,0,.3);">R7</div>
<div class="t" style="left:40.0px;top:523.44px;font-size:13.6px;line-height:13.6px;color:#d1d5db;">Kilcoy <span style="font-size:12px;color:#9ca3af">(QLD)</span></div>
<div class="t" style="left:40.00px;top:539.09px;font-size:11px;line-height:11px;color:#545a65;font-weight:400;font-family:'Liberation Sans', sans-serif;">6 races</div>
<div class="b" style="left:189.00px;top:523.00px;width:2.00px;height:28.00px;background:rgba(239,68,68,.5);"></div>
<div class="b" style="left:291.50px;top:525.00px;width:32.00px;height:24.00px;background:#c62828;border-radius:4px;box-shadow:0 1px 2px rgba(0,0,0,.3);"></div>
<div class="t" style="left:107.50px;width:400px;text-align:center;top:531.89px;font-size:11px;line-height:11px;color:#ffffff;font-weight:700;font-family:'Liberation Sans', sans-serif;text-shadow:0 1px 1.5px rgba(0,0,0,.3);">R1</div>
<div class="b" style="left:368.00px;top:525.00px;width:32.00px;height:24.00px;background:#c62828;border-radius:4px;box-shadow:0 1px 2px rgba(0,0,0,.3);"></div>
<div class="t" style="left:184.00px;width:400px;text-align:center;top:531.89px;font-size:11px;line-height:11px;color:#ffffff;font-weight:700;font-family:'Liberation Sans', sans-serif;text-shadow:0 1px 1.5px rgba(0,0,0,.3);">R2</div>
<div class="b" style="left:444.10px;top:525.00px;width:32.00px;height:24.00px;background:#c62828;border-radius:4px;box-shadow:0 1px 2px rgba(0,0,0,.3);"></div>
<div class="t" style="left:260.10px;width:400px;text-align:center;top:531.89px;font-size:11px;line-height:11px;color:#ffffff;font-weight:700;font-family:'Liberation Sans', sans-serif;text-shadow:0 1px 1.5px rgba(0,0,0,.3);">R3</div>
<div class="b" style="left:520.60px;top:525.00px;width:32.00px;height:24.00px;background:#c62828;border-radius:4px;box-shadow:0 1px 2px rgba(0,0,0,.3);"></div>
<div class="t" style="left:336.60px;width:400px;text-align:center;top:531.89px;font-size:11px;line-height:11px;color:#ffffff;font-weight:700;font-family:'Liberation Sans', sans-serif;text-shadow:0 1px 1.5px rgba(0,0,0,.3);">R4</div>
<div class="b" style="left:597.00px;top:525.00px;width:32.00px;height:24.00px;background:#c62828;border-radius:4px;box-shadow:0 1px 2px rgba(0,0,0,.3);"></div>
<div class="t" style="left:413.00px;width:400px;text-align:center;top:531.89px;font-size:11px;line-height:11px;color:#ffffff;font-weight:700;font-family:'Liberation Sans', sans-serif;text-shadow:0 1px 1.5px rgba(0,0,0,.3);">R5</div>
<div class="b" style="left:673.10px;top:525.00px;width:32.00px;height:24.00px;background:#c62828;border-radius:4px;box-shadow:0 1px 2px rgba(0,0,0,.3);"></div>
<div class="t" style="left:489.10px;width:400px;text-align:center;top:531.89px;font-size:11px;line-height:11px;color:#ffffff;font-weight:700;font-family:'Liberation Sans', sans-serif;text-shadow:0 1px 1.5px rgba(0,0,0,.3);">R6</div>
<div class="t" style="left:40.0px;top:567.44px;font-size:13.6px;line-height:13.6px;color:#d1d5db;">Warwick Farm <span style="font-size:12px;color:#9ca3af">(NSW)</span></div>
<div class="t" style="left:40.00px;top:583.09px;font-size:11px;line-height:11px;color:#545a65;font-weight:400;font-family:'Liberation Sans', sans-serif;">7 races</div>
<div class="b" style="left:189.00px;top:567.00px;width:2.00px;height:28.00px;background:rgba(239,68,68,.5);"></div>
<div class="b" style="left:359.00px;top:569.00px;width:32.00px;height:24.00px;background:#6a1b9a;border-radius:4px;box-shadow:0 1px 2px rgba(0,0,0,.3);"></div>
<div class="t" style="left:175.00px;width:400px;text-align:center;top:575.89px;font-size:11px;line-height:11px;color:#ffffff;font-weight:700;font-family:'Liberation Sans', sans-serif;text-shadow:0 1px 1.5px rgba(0,0,0,.3);">R1</div>
<div class="b" style="left:435.40px;top:569.00px;width:32.00px;height:24.00px;background:#6a1b9a;border-radius:4px;box-shadow:0 1px 2px rgba(0,0,0,.3);"></div>
<div class="t" style="left:251.40px;width:400px;text-align:center;top:575.89px;font-size:11px;line-height:11px;color:#ffffff;font-weight:700;font-family:'Liberation Sans', sans-serif;text-shadow:0 1px 1.5px rgba(0,0,0,.3);">R2</div>
<div class="b" style="left:511.90px;top:569.00px;width:32.00px;height:24.00px;background:#6a1b9a;border-radius:4px;box-shadow:0 1px 2px rgba(0,0,0,.3);"></div>
<div class="t" style="left:327.90px;width:400px;text-align:center;top:575.89px;font-size:11px;line-height:11px;color:#ffffff;font-weight:700;font-family:'Liberation Sans', sans-serif;text-shadow:0 1px 1.5px rgba(0,0,0,.3);">R3</div>
<div class="b" style="left:588.00px;top:569.00px;width:32.00px;height:24.00px;background:#6a1b9a;border-radius:4px;box-shadow:0 1px 2px rgba(0,0,0,.3);"></div>
<div class="t" style="left:404.00px;width:400px;text-align:center;top:575.89px;font-size:11px;line-height:11px;color:#ffffff;font-weight:700;font-family:'Liberation Sans', sans-serif;text-shadow:0 1px 1.5px rgba(0,0,0,.3);">R4</div>
<div class="b" style="left:664.70px;top:569.00px;width:32.00px;height:24.00px;background:#6a1b9a;border-radius:4px;box-shadow:0 1px 2px rgba(0,0,0,.3);"></div>
<div class="t" style="left:480.70px;width:400px;text-align:center;top:575.89px;font-size:11px;line-height:11px;color:#ffffff;font-weight:700;font-family:'Liberation Sans', sans-serif;text-shadow:0 1px 1.5px rgba(0,0,0,.3);">R5</div>
<div class="b" style="left:740.50px;top:569.00px;width:32.00px;height:24.00px;background:#6a1b9a;border-radius:4px;box-shadow:0 1px 2px rgba(0,0,0,.3);"></div>
<div class="t" style="left:556.50px;width:400px;text-align:center;top:575.89px;font-size:11px;line-height:11px;color:#ffffff;font-weight:700;font-family:'Liberation Sans', sans-serif;text-shadow:0 1px 1.5px rgba(0,0,0,.3);">R6</div>
<div class="b" style="left:817.00px;top:569.00px;width:32.00px;height:24.00px;background:#6a1b9a;border-radius:4px;box-shadow:0 1px 2px rgba(0,0,0,.3);"></div>
<div class="t" style="left:633.00px;width:400px;text-align:center;top:575.89px;font-size:11px;line-height:11px;color:#ffffff;font-weight:700;font-family:'Liberation Sans', sans-serif;text-shadow:0 1px 1.5px rgba(0,0,0,.3);">R7</div>
<div class="t" style="left:40.0px;top:611.44px;font-size:13.6px;line-height:13.6px;color:#d1d5db;">Eagle Farm <span style="font-size:12px;color:#9ca3af">(QLD)</span></div>
<div class="t" style="left:40.00px;top:627.09px;font-size:11px;line-height:11px;color:#545a65;font-weight:400;font-family:'Liberation Sans', sans-serif;">8 races</div>
<div class="b" style="left:189.00px;top:611.00px;width:2.00px;height:28.00px;background:rgba(239,68,68,.5);"></div>
<div class="b" style="left:322.00px;top:613.00px;width:32.00px;height:24.00px;background:#00838f;border-radius:4px;box-shadow:0 1px 2px rgba(0,0,0,.3);"></div>
<div class="t" style="left:138.00px;width:400px;text-align:center;top:619.89px;font-size:11px;line-height:11px;color:#ffffff;font-weight:700;font-family:'Liberation Sans', sans-serif;text-shadow:0 1px 1.5px rgba(0,0,0,.3);">R1</div>
<div class="b" style="left:398.40px;top:613.00px;width:32.00px;height:24.00px;background:#00838f;border-radius:4px;box-shadow:0 1px 2px rgba(0,0,0,.3);"></div>
<div class="t" style="left:214.40px;width:400px;text-align:center;top:619.89px;font-size:11px;line-height:11px;color:#ffffff;font-weight:700;font-family:'Liberation Sans', sans-serif;text-shadow:0 1px 1.5px rgba(0,0,0,.3);">R2</div>
<div class="b" style="left:474.50px;top:613.00px;width:32.00px;height:24.00px;background:#00838f;border-radius:4px;box-shadow:0 1px 2px rgba(0,0,0,.3);"></div>
<div class="t" style="left:290.50px;width:400px;text-align:center;top:619.89px;font-size:11px;line-height:11px;color:#ffffff;font-weight:700;font-family:'Liberation Sans', sans-serif;text-shadow:0 1px 1.5px rgba(0,0,0,.3);">R3</div>
<div class="b" style="left:551.00px;top:613.00px;width:32.00px;height:24.00px;background:#00838f;border-radius:4px;box-shadow:0 1px 2px rgba(0,0,0,.3);"></div>
<div class="t" style="left:367.00px;width:400px;text-align:center;top:619.89px;font-size:11px;line-height:11px;color:#ffffff;font-weight:700;font-family:'Liberation Sans', sans-serif;text-shadow:0 1px 1.5px rgba(0,0,0,.3);">R4</div>
<div class="b" style="left:627.50px;top:613.00px;width:32.00px;height:24.00px;background:#00838f;border-radius:4px;box-shadow:0 1px 2px rgba(0,0,0,.3);"></div>
<div class="t" style="left:443.50px;width:400px;text-align:center;top:619.89px;font-size:11px;line-height:11px;color:#ffffff;font-weight:700;font-family:'Liberation Sans', sans-serif;text-shadow:0 1px 1.5px rgba(0,0,0,.3);">R5</div>
<div class="b" style="left:703.50px;top:613.00px;width:32.00px;height:24.00px;background:#00838f;border-radius:4px;box-shadow:0 1px 2px rgba(0,0,0,.3);"></div>
<div class="t" style="left:519.50px;width:400px;text-align:center;top:619.89px;font-size:11px;line-height:11px;color:#ffffff;font-weight:700;font-family:'Liberation Sans', sans-serif;text-shadow:0 1px 1.5px rgba(0,0,0,.3);">R6</div>
<div class="b" style="left:777.60px;top:613.00px;width:32.00px;height:24.00px;background:#00838f;border-radius:4px;box-shadow:0 1px 2px rgba(0,0,0,.3);"></div>
<div class="t" style="left:593.60px;width:400px;text-align:center;top:619.89px;font-size:11px;line-height:11px;color:#ffffff;font-weight:700;font-family:'Liberation Sans', sans-serif;text-shadow:0 1px 1.5px rgba(0,0,0,.3);">R7</div>
<div class="b" style="left:845.00px;top:613.00px;width:32.00px;height:24.00px;background:#00838f;border-radius:4px;box-shadow:0 1px 2px rgba(0,0,0,.3);"></div>
<div class="t" style="left:661.00px;width:400px;text-align:center;top:619.89px;font-size:11px;line-height:11px;color:#ffffff;font-weight:700;font-family:'Liberation Sans', sans-serif;text-shadow:0 1px 1.5px rgba(0,0,0,.3);">R8</div>
<div class="t" style="left:40.0px;top:655.44px;font-size:13.6px;line-height:13.6px;color:#d1d5db;">Strathalbyn <span style="font-size:12px;color:#9ca3af">(SA)</span></div>
<div class="t" style="left:40.00px;top:671.09px;font-size:11px;line-height:11px;color:#545a65;font-weight:400;font-family:'Liberation Sans', sans-serif;">7 races</div>
<div class="b" style="left:189.00px;top:655.00px;width:2.00px;height:28.00px;background:rgba(239,68,68,.5);"></div>
<div class="b" style="left:255.10px;top:651.00px;width:44.00px;height:36.00px;background:#2a1c22;border-radius:10px;"></div>
<div class="b" style="left:258.10px;top:654.00px;width:38.00px;height:30.00px;background:#63232f;border-radius:7px;"></div>
<div class="b" style="left:261.10px;top:657.00px;width:32.00px;height:24.00px;background:#ef6c00;border-radius:4px;box-shadow:0 1px 2px rgba(0,0,0,.3);"></div>
<div class="t" style="left:77.10px;width:400px;text-align:center;top:663.89px;font-size:11px;line-height:11px;color:#ffffff;font-weight:700;font-family:'Liberation Sans', sans-serif;text-shadow:0 1px 1.5px rgba(0,0,0,.3);">R1</div>
<div class="b" style="left:337.60px;top:657.00px;width:32.00px;height:24.00px;background:#ef6c00;border-radius:4px;box-shadow:0 1px 2px rgba(0,0,0,.3);"></div>
<div class="t" style="left:153.60px;width:400px;text-align:center;top:663.89px;font-size:11px;line-height:11px;color:#ffffff;font-weight:700;font-family:'Liberation Sans', sans-serif;text-shadow:0 1px 1.5px rgba(0,0,0,.3);">R2</div>
<div class="b" style="left:413.70px;top:657.00px;width:32.00px;height:24.00px;background:#ef6c00;border-radius:4px;box-shadow:0 1px 2px rgba(0,0,0,.3);"></div>
<div class="t" style="left:229.70px;width:400px;text-align:center;top:663.89px;font-size:11px;line-height:11px;color:#ffffff;font-weight:700;font-family:'Liberation Sans', sans-serif;text-shadow:0 1px 1.5px rgba(0,0,0,.3);">R3</div>
<div class="b" style="left:490.10px;top:657.00px;width:32.00px;height:24.00px;background:#ef6c00;border-radius:4px;box-shadow:0 1px 2px rgba(0,0,0,.3);"></div>
<div class="t" style="left:306.10px;width:400px;text-align:center;top:663.89px;font-size:11px;line-height:11px;color:#ffffff;font-weight:700;font-family:'Liberation Sans', sans-serif;text-shadow:0 1px 1.5px rgba(0,0,0,.3);">R4</div>
<div class="b" style="left:566.60px;top:657.00px;width:32.00px;height:24.00px;background:#ef6c00;border-radius:4px;box-shadow:0 1px 2px rgba(0,0,0,.3);"></div>
<div class="t" style="left:382.60px;width:400px;text-align:center;top:663.89px;font-size:11px;line-height:11px;color:#ffffff;font-weight:700;font-family:'Liberation Sans', sans-serif;text-shadow:0 1px 1.5px rgba(0,0,0,.3);">R5</div>
<div class="b" style="left:642.70px;top:657.00px;width:32.00px;height:24.00px;background:#ef6c00;border-radius:4px;box-shadow:0 1px 2px rgba(0,0,0,.3);"></div>
<div class="t" style="left:458.70px;width:400px;text-align:center;top:663.89px;font-size:11px;line-height:11px;color:#ffffff;font-weight:700;font-family:'Liberation Sans', sans-serif;text-shadow:0 1px 1.5px rgba(0,0,0,.3);">R6</div>
<div class="b" style="left:719.20px;top:657.00px;width:32.00px;height:24.00px;background:#ef6c00;border-radius:4px;box-shadow:0 1px 2px rgba(0,0,0,.3);"></div>
<div class="t" style="left:535.20px;width:400px;text-align:center;top:663.89px;font-size:11px;line-height:11px;color:#ffffff;font-weight:700;font-family:'Liberation Sans', sans-serif;text-shadow:0 1px 1.5px rgba(0,0,0,.3);">R7</div>
<div class="b" style="left:40.00px;top:703.00px;width:1196.00px;height:1.00px;background:#2a2e36;"></div>
<div class="b" style="left:437.10px;top:716.10px;width:20.00px;height:14.00px;background:#2d4f7a;border-radius:3px;"></div>
<div class="t" style="left:462.30px;top:717.04px;font-size:12px;line-height:12px;color:#9ca3af;font-weight:400;font-family:'Liberation Sans', sans-serif;">Past races</div>
<div class="b" style="left:543.20px;top:716.10px;width:20.00px;height:14.00px;background:#5aa3f6;border-radius:3px;"></div>
<div class="t" style="left:568.40px;top:717.04px;font-size:12px;line-height:12px;color:#9ca3af;font-weight:400;font-family:'Liberation Sans', sans-serif;">Upcoming</div>
<div class="b" style="left:644.50px;top:715.00px;width:23.30px;height:16.20px;background:#5aa3f6;border:2px solid #7a2530;border-radius:4px;"></div>
<div class="t" style="left:672.10px;top:717.04px;font-size:12px;line-height:12px;color:#9ca3af;font-weight:400;font-family:'Liberation Sans', sans-serif;">Next race</div>
<div class="b" style="left:747.50px;top:722.20px;width:20.00px;height:1.60px;background:#ef4444;"></div>
<div class="t" style="left:772.90px;top:717.04px;font-size:12px;line-height:12px;color:#9ca3af;font-weight:400;font-family:'Liberation Sans', sans-serif;">Current time</div>
<div class="b" style="left:24.00px;top:770.00px;width:1228.00px;height:521.00px;background:#181b22;border-radius:8px;box-shadow:0 1px 4px rgba(0,0,0,.55);"></div>
<div class="b" style="left:1005.20px;top:790.20px;width:230.50px;height:35.50px;background:#1f232b;border:1px solid #30343c;border-radius:6px;"></div>
<div class="t" style="left:1017.80px;top:800.16px;font-size:16px;line-height:16px;color:#8b919b;font-weight:400;font-family:'Liberation Sans', sans-serif;">Search all...</div>
<div class="b" style="left:24.00px;top:846.00px;width:1228.00px;height:1.00px;background:#2a2e36;"></div>
<div class="b" style="left:24.00px;top:888.80px;width:1228.00px;height:1.00px;background:#2a2e36;"></div>
<div class="t" style="left:40.10px;top:860.36px;font-size:16px;line-height:16px;color:#e5e7eb;font-weight:700;font-family:'Liberation Sans', sans-serif;">Venue</div>
<svg class="b" style="left:95.00px;top:861.20px;" width="14" height="15.5" viewBox="0 0 13.5 14.5" fill="none"><path d="M3.5 12.6V1.4M1 3.9l2.5-2.5L6 3.9" stroke="#4b5563" stroke-width="1.2" stroke-linecap="round" stroke-linejoin="round"/><path d="M9.5 1.4v11.2M7 10.1l2.5 2.5 2.5-2.5" stroke="#4b5563" stroke-width="1.2" stroke-linecap="round" stroke-linejoin="round"/></svg>
<div class="t" style="left:245.20px;top:860.36px;font-size:16px;line-height:16px;color:#e5e7eb;font-weight:700;font-family:'Liberation Sans', sans-serif;">State</div>
<svg class="b" style="left:292.50px;top:861.20px;" width="14" height="15.5" viewBox="0 0 13.5 14.5" fill="none"><path d="M3.5 12.6V1.4M1 3.9l2.5-2.5L6 3.9" stroke="#4b5563" stroke-width="1.2" stroke-linecap="round" stroke-linejoin="round"/><path d="M9.5 1.4v11.2M7 10.1l2.5 2.5 2.5-2.5" stroke="#4b5563" stroke-width="1.2" stroke-linecap="round" stroke-linejoin="round"/></svg>
<div class="t" style="left:443.00px;top:860.36px;font-size:16px;line-height:16px;color:#e5e7eb;font-weight:700;font-family:'Liberation Sans', sans-serif;">Country</div>
<svg class="b" style="left:512.60px;top:861.20px;" width="14" height="15.5" viewBox="0 0 13.5 14.5" fill="none"><path d="M3.5 12.6V1.4M1 3.9l2.5-2.5L6 3.9" stroke="#4b5563" stroke-width="1.2" stroke-linecap="round" stroke-linejoin="round"/><path d="M9.5 1.4v11.2M7 10.1l2.5 2.5 2.5-2.5" stroke="#4b5563" stroke-width="1.2" stroke-linecap="round" stroke-linejoin="round"/></svg>
<div class="t" style="left:649.50px;top:860.36px;font-size:16px;line-height:16px;color:#e5e7eb;font-weight:700;font-family:'Liberation Sans', sans-serif;">Type</div>
<svg class="b" style="left:693.50px;top:861.20px;" width="14" height="15.5" viewBox="0 0 13.5 14.5" fill="none"><path d="M3.5 12.6V1.4M1 3.9l2.5-2.5L6 3.9" stroke="#4b5563" stroke-width="1.2" stroke-linecap="round" stroke-linejoin="round"/><path d="M9.5 1.4v11.2M7 10.1l2.5 2.5 2.5-2.5" stroke="#4b5563" stroke-width="1.2" stroke-linecap="round" stroke-linejoin="round"/></svg>
<div class="t" style="left:862.10px;top:860.36px;font-size:16px;line-height:16px;color:#e5e7eb;font-weight:700;font-family:'Liberation Sans', sans-serif;">Track</div>
<svg class="b" style="left:911.90px;top:861.20px;" width="14" height="15.5" viewBox="0 0 13.5 14.5" fill="none"><path d="M3.5 12.6V1.4M1 3.9l2.5-2.5L6 3.9" stroke="#4b5563" stroke-width="1.2" stroke-linecap="round" stroke-linejoin="round"/><path d="M9.5 1.4v11.2M7 10.1l2.5 2.5 2.5-2.5" stroke="#4b5563" stroke-width="1.2" stroke-linecap="round" stroke-linejoin="round"/></svg>
<div class="t" style="left:1060.30px;top:860.36px;font-size:16px;line-height:16px;color:#e5e7eb;font-weight:700;font-family:'Liberation Sans', sans-serif;">Weather</div>
<svg class="b" style="left:1131.00px;top:861.20px;" width="14" height="15.5" viewBox="0 0 13.5 14.5" fill="none"><path d="M3.5 12.6V1.4M1 3.9l2.5-2.5L6 3.9" stroke="#4b5563" stroke-width="1.2" stroke-linecap="round" stroke-linejoin="round"/><path d="M9.5 1.4v11.2M7 10.1l2.5 2.5 2.5-2.5" stroke="#4b5563" stroke-width="1.2" stroke-linecap="round" stroke-linejoin="round"/></svg>
<div class="t" style="left:636.30px;width:600px;text-align:right;top:860.36px;font-size:16px;line-height:16px;color:#e5e7eb;font-weight:700;font-family:'Liberation Sans', sans-serif;">Actions</div>
<div class="b" style="left:40.10px;top:907.20px;width:124.50px;height:29.60px;background:#1f232b;border:1px solid #30343c;border-radius:5px;"></div>
<div class="t" style="left:47.40px;top:915.09px;font-size:13.6px;line-height:13.6px;color:#8b919b;font-weight:400;font-family:'Liberation Sans', sans-serif;">Filter venue</div>
<svg class="b" style="left:185.20px;top:914.00px;" width="15.8" height="16" viewBox="0 0 15.8 16" fill="none"><path d="M1 1.2h13.8L9.6 7.6v7.2H6.2V7.6z" stroke="#9ca3af" stroke-width="1.3" stroke-linejoin="round"/></svg>
<div class="b" style="left:245.30px;top:907.20px;width:117.40px;height:29.60px;background:#1f232b;border:1px solid #30343c;border-radius:5px;"></div>
<div class="t" style="left:252.60px;top:915.09px;font-size:13.6px;line-height:13.6px;color:#8b919b;font-weight:400;font-family:'Liberation Sans', sans-serif;">Filter state</div>
<svg class="b" style="left:383.20px;top:914.00px;" width="15.8" height="16" viewBox="0 0 15.8 16" fill="none"><path d="M1 1.2h13.8L9.6 7.6v7.2H6.2V7.6z" stroke="#9ca3af" stroke-width="1.3" stroke-linejoin="round"/></svg>
<div class="b" style="left:443.20px;top:907.20px;width:125.80px;height:29.60px;background:#1f232b;border:1px solid #30343c;border-radius:5px;"></div>
<div class="t" style="left:450.50px;top:915.09px;font-size:13.6px;line-height:13.6px;color:#8b919b;font-weight:400;font-family:'Liberation Sans', sans-serif;">Filter country</div>
<svg class="b" style="left:589.80px;top:914.00px;" width="15.8" height="16" viewBox="0 0 15.8 16" fill="none"><path d="M1 1.2h13.8L9.6 7.6v7.2H6.2V7.6z" stroke="#9ca3af" stroke-width="1.3" stroke-linejoin="round"/></svg>
<div class="b" style="left:862.40px;top:907.20px;width:117.80px;height:29.60px;background:#1f232b;border:1px solid #30343c;border-radius:5px;"></div>
<div class="t" style="left:869.70px;top:915.09px;font-size:13.6px;line-height:13.6px;color:#8b919b;font-weight:400;font-family:'Liberation Sans', sans-serif;">Filter track</div>
<svg class="b" style="left:1000.70px;top:914.00px;" width="15.8" height="16" viewBox="0 0 15.8 16" fill="none"><path d="M1 1.2h13.8L9.6 7.6v7.2H6.2V7.6z" stroke="#9ca3af" stroke-width="1.3" stroke-linejoin="round"/></svg>
<div class="b" style="left:649.80px;top:904.30px;width:131.80px;height:35.50px;background:#1f232b;border:1px solid #30343c;border-radius:6px;"></div>
<div class="t" style="left:662.00px;top:913.91px;font-size:16px;line-height:16px;color:#e5e7eb;font-weight:700;font-family:'Liberation Sans', sans-serif;">All types</div>
<svg class="b" style="left:753.50px;top:917.60px;" width="15" height="9" viewBox="0 0 15 9" fill="none"><path d="M1 1l6.5 6.5L14 1" stroke="#9ca3af" stroke-width="1.6" stroke-linecap="round" stroke-linejoin="round"/></svg>
<svg class="b" style="left:802.10px;top:914.00px;" width="15.8" height="16" viewBox="0 0 15.8 16" fill="none"><path d="M1 1.2h13.8L9.6 7.6v7.2H6.2V7.6z" stroke="#9ca3af" stroke-width="1.3" stroke-linejoin="round"/></svg>
<div class="b" style="left:24.00px;top:953.80px;width:1228.00px;height:1.00px;background:#2a2e36;"></div>
<div class="t" style="left:39.50px;top:969.86px;font-size:16px;line-height:16px;color:#e5e7eb;font-weight:400;font-family:'Liberation Sans', sans-serif;">Caulfield Heath</div>
<div class="t" style="left:244.60px;top:969.86px;font-size:16px;line-height:16px;color:#e5e7eb;font-weight:400;font-family:'Liberation Sans', sans-serif;">VIC</div>
<div class="b" style="left:443.00px;top:968.00px;width:31.00px;height:19.20px;background:#1e2a3d;border-radius:3px;"></div>
<div class="t" style="left:258.50px;width:400px;text-align:center;top:971.30px;font-size:13px;line-height:13px;color:#60a5fa;font-weight:400;font-family:'Liberation Sans', sans-serif;">AU</div>
<div class="b" style="left:649.50px;top:967.00px;width:96.30px;height:21.30px;background:#1b2e22;border-radius:4px;"></div>
<div class="t" style="left:497.65px;width:400px;text-align:center;top:971.30px;font-size:13px;line-height:13px;color:#4caf50;font-weight:400;font-family:'Liberation Sans', sans-serif;">Thoroughbred</div>
<div class="t" style="left:861.50px;top:969.86px;font-size:16px;line-height:16px;color:#e5e7eb;font-weight:400;font-family:'Liberation Sans', sans-serif;">Good</div>
<div class="t" style="left:1060.40px;top:969.86px;font-size:16px;line-height:16px;color:#e5e7eb;font-weight:400;font-family:'Liberation Sans', sans-serif;">Fine</div>
<div class="t" style="left:619.80px;width:600px;text-align:right;top:969.86px;font-size:16px;line-height:16px;color:#60a5fa;font-weight:400;font-family:'Liberation Sans', sans-serif;">View</div>
<div class="b" style="left:24.00px;top:1000.40px;width:1228.00px;height:1.00px;background:#2a2e36;"></div>
<div class="t" style="left:39.50px;top:1016.26px;font-size:16px;line-height:16px;color:#e5e7eb;font-weight:400;font-family:'Liberation Sans', sans-serif;">Belmont Park</div>
<div class="t" style="left:244.60px;top:1016.26px;font-size:16px;line-height:16px;color:#e5e7eb;font-weight:400;font-family:'Liberation Sans', sans-serif;">WA</div>
<div class="b" style="left:443.00px;top:1014.40px;width:31.00px;height:19.20px;background:#1e2a3d;border-radius:3px;"></div>
<div class="t" style="left:258.50px;width:400px;text-align:center;top:1017.70px;font-size:13px;line-height:13px;color:#60a5fa;font-weight:400;font-family:'Liberation Sans', sans-serif;">AU</div>
<div class="b" style="left:649.50px;top:1013.40px;width:96.30px;height:21.30px;background:#1b2e22;border-radius:4px;"></div>
<div class="t" style="left:497.65px;width:400px;text-align:center;top:1017.70px;font-size:13px;line-height:13px;color:#4caf50;font-weight:400;font-family:'Liberation Sans', sans-serif;">Thoroughbred</div>
<div class="t" style="left:861.50px;top:1016.26px;font-size:16px;line-height:16px;color:#e5e7eb;font-weight:400;font-family:'Liberation Sans', sans-serif;">Good</div>
<div class="t" style="left:1060.40px;top:1016.26px;font-size:16px;line-height:16px;color:#e5e7eb;font-weight:400;font-family:'Liberation Sans', sans-serif;">Fine</div>
<div class="t" style="left:619.80px;width:600px;text-align:right;top:1016.26px;font-size:16px;line-height:16px;color:#60a5fa;font-weight:400;font-family:'Liberation Sans', sans-serif;">View</div>
<div class="b" style="left:24.00px;top:1046.80px;width:1228.00px;height:1.00px;background:#2a2e36;"></div>
<div class="t" style="left:39.50px;top:1062.66px;font-size:16px;line-height:16px;color:#e5e7eb;font-weight:400;font-family:'Liberation Sans', sans-serif;">Kilcoy</div>
<div class="t" style="left:244.60px;top:1062.66px;font-size:16px;line-height:16px;color:#e5e7eb;font-weight:400;font-family:'Liberation Sans', sans-serif;">QLD</div>
<div class="b" style="left:443.00px;top:1060.80px;width:31.00px;height:19.20px;background:#1e2a3d;border-radius:3px;"></div>
<div class="t" style="left:258.50px;width:400px;text-align:center;top:1064.10px;font-size:13px;line-height:13px;color:#60a5fa;font-weight:400;font-family:'Liberation Sans', sans-serif;">AU</div>
<div class="b" style="left:649.50px;top:1059.80px;width:96.30px;height:21.30px;background:#1b2e22;border-radius:4px;"></div>
<div class="t" style="left:497.65px;width:400px;text-align:center;top:1064.10px;font-size:13px;line-height:13px;color:#4caf50;font-weight:400;font-family:'Liberation Sans', sans-serif;">Thoroughbred</div>
<div class="t" style="left:861.50px;top:1062.66px;font-size:16px;line-height:16px;color:#e5e7eb;font-weight:400;font-family:'Liberation Sans', sans-serif;">Soft</div>
<div class="t" style="left:1060.40px;top:1062.66px;font-size:16px;line-height:16px;color:#e5e7eb;font-weight:400;font-family:'Liberation Sans', sans-serif;">Fine</div>
<div class="t" style="left:619.80px;width:600px;text-align:right;top:1062.66px;font-size:16px;line-height:16px;color:#60a5fa;font-weight:400;font-family:'Liberation Sans', sans-serif;">View</div>
<div class="b" style="left:24.00px;top:1093.20px;width:1228.00px;height:1.00px;background:#2a2e36;"></div>
<div class="t" style="left:39.50px;top:1109.06px;font-size:16px;line-height:16px;color:#e5e7eb;font-weight:400;font-family:'Liberation Sans', sans-serif;">Warwick Farm</div>
<div class="t" style="left:244.60px;top:1109.06px;font-size:16px;line-height:16px;color:#e5e7eb;font-weight:400;font-family:'Liberation Sans', sans-serif;">NSW</div>
<div class="b" style="left:443.00px;top:1107.20px;width:31.00px;height:19.20px;background:#1e2a3d;border-radius:3px;"></div>
<div class="t" style="left:258.50px;width:400px;text-align:center;top:1110.50px;font-size:13px;line-height:13px;color:#60a5fa;font-weight:400;font-family:'Liberation Sans', sans-serif;">AU</div>
<div class="b" style="left:649.50px;top:1106.20px;width:96.30px;height:21.30px;background:#1b2e22;border-radius:4px;"></div>
<div class="t" style="left:497.65px;width:400px;text-align:center;top:1110.50px;font-size:13px;line-height:13px;color:#4caf50;font-weight:400;font-family:'Liberation Sans', sans-serif;">Thoroughbred</div>
<div class="t" style="left:861.50px;top:1109.06px;font-size:16px;line-height:16px;color:#e5e7eb;font-weight:400;font-family:'Liberation Sans', sans-serif;">Good</div>
<div class="t" style="left:1060.40px;top:1109.06px;font-size:16px;line-height:16px;color:#e5e7eb;font-weight:400;font-family:'Liberation Sans', sans-serif;">Fine</div>
<div class="t" style="left:619.80px;width:600px;text-align:right;top:1109.06px;font-size:16px;line-height:16px;color:#60a5fa;font-weight:400;font-family:'Liberation Sans', sans-serif;">View</div>
<div class="b" style="left:24.00px;top:1139.60px;width:1228.00px;height:1.00px;background:#2a2e36;"></div>
<div class="t" style="left:39.50px;top:1155.46px;font-size:16px;line-height:16px;color:#e5e7eb;font-weight:400;font-family:'Liberation Sans', sans-serif;">Eagle Farm</div>
<div class="t" style="left:244.60px;top:1155.46px;font-size:16px;line-height:16px;color:#e5e7eb;font-weight:400;font-family:'Liberation Sans', sans-serif;">QLD</div>
<div class="b" style="left:443.00px;top:1153.60px;width:31.00px;height:19.20px;background:#1e2a3d;border-radius:3px;"></div>
<div class="t" style="left:258.50px;width:400px;text-align:center;top:1156.90px;font-size:13px;line-height:13px;color:#60a5fa;font-weight:400;font-family:'Liberation Sans', sans-serif;">AU</div>
<div class="b" style="left:649.50px;top:1152.60px;width:96.30px;height:21.30px;background:#1b2e22;border-radius:4px;"></div>
<div class="t" style="left:497.65px;width:400px;text-align:center;top:1156.90px;font-size:13px;line-height:13px;color:#4caf50;font-weight:400;font-family:'Liberation Sans', sans-serif;">Thoroughbred</div>
<div class="t" style="left:861.50px;top:1155.46px;font-size:16px;line-height:16px;color:#e5e7eb;font-weight:400;font-family:'Liberation Sans', sans-serif;">Soft</div>
<div class="t" style="left:1060.40px;top:1155.46px;font-size:16px;line-height:16px;color:#e5e7eb;font-weight:400;font-family:'Liberation Sans', sans-serif;">Fine</div>
<div class="t" style="left:619.80px;width:600px;text-align:right;top:1155.46px;font-size:16px;line-height:16px;color:#60a5fa;font-weight:400;font-family:'Liberation Sans', sans-serif;">View</div>
<div class="b" style="left:24.00px;top:1186.00px;width:1228.00px;height:1.00px;background:#2a2e36;"></div>
<div class="t" style="left:39.50px;top:1201.86px;font-size:16px;line-height:16px;color:#e5e7eb;font-weight:400;font-family:'Liberation Sans', sans-serif;">Strathalbyn</div>
<div class="t" style="left:244.60px;top:1201.86px;font-size:16px;line-height:16px;color:#e5e7eb;font-weight:400;font-family:'Liberation Sans', sans-serif;">SA</div>
<div class="b" style="left:443.00px;top:1200.00px;width:31.00px;height:19.20px;background:#1e2a3d;border-radius:3px;"></div>
<div class="t" style="left:258.50px;width:400px;text-align:center;top:1203.30px;font-size:13px;line-height:13px;color:#60a5fa;font-weight:400;font-family:'Liberation Sans', sans-serif;">AU</div>
<div class="b" style="left:649.50px;top:1199.00px;width:96.30px;height:21.30px;background:#1b2e22;border-radius:4px;"></div>
<div class="t" style="left:497.65px;width:400px;text-align:center;top:1203.30px;font-size:13px;line-height:13px;color:#4caf50;font-weight:400;font-family:'Liberation Sans', sans-serif;">Thoroughbred</div>
<div class="t" style="left:861.50px;top:1201.86px;font-size:16px;line-height:16px;color:#e5e7eb;font-weight:400;font-family:'Liberation Sans', sans-serif;">Soft</div>
<div class="t" style="left:1060.40px;top:1201.86px;font-size:16px;line-height:16px;color:#e5e7eb;font-weight:400;font-family:'Liberation Sans', sans-serif;">Fine</div>
<div class="t" style="left:619.80px;width:600px;text-align:right;top:1201.86px;font-size:16px;line-height:16px;color:#60a5fa;font-weight:400;font-family:'Liberation Sans', sans-serif;">View</div>
<div class="b" style="left:24.00px;top:1232.50px;width:1228.00px;height:2.00px;background:#30343c;"></div>
<div class="b" style="left:24.00px;top:1234.50px;width:1228.00px;height:56.50px;background:#181b21;border-radius:8px;border:1px solid #22252c;border-bottom-color:#2a2e36;"></div>
<svg class="b" style="left:500.00px;top:1256.50px;" width="13" height="12" viewBox="0 0 13 12" fill="none"><path d="M6 1.5L1.7 6 6 10.5M11.5 1.5L7.2 6l4.3 4.5" stroke="#6b7280" stroke-width="1.5" stroke-linecap="round" stroke-linejoin="round"/></svg>
<svg class="b" style="left:546.30px;top:1256.50px;" width="8" height="12" viewBox="0 0 8 12" fill="none"><path d="M6.5 1.5L2.2 6l4.3 4.5" stroke="#6b7280" stroke-width="1.5" stroke-linecap="round" stroke-linejoin="round"/></svg>
<div class="b" style="left:574.00px;top:1242.50px;width:40.00px;height:40.00px;background:#1e3b39;border-radius:50%;"></div>
<div class="t" style="left:394.00px;width:400px;text-align:center;top:1254.66px;font-size:16px;line-height:16px;color:#e5e7eb;font-weight:400;font-family:'Liberation Sans', sans-serif;">1</div>
<svg class="b" style="left:633.70px;top:1256.50px;" width="8" height="12" viewBox="0 0 8 12" fill="none"><path d="M1.5 1.5L5.8 6l-4.3 4.5" stroke="#6b7280" stroke-width="1.5" stroke-linecap="round" stroke-linejoin="round"/></svg>
<svg class="b" style="left:675.50px;top:1256.50px;" width="13" height="12" viewBox="0 0 13 12" fill="none"><path d="M1.5 1.5L5.8 6 1.5 10.5M7 1.5L11.3 6 7 10.5" stroke="#6b7280" stroke-width="1.5" stroke-linecap="round" stroke-linejoin="round"/></svg>
<div class="b" style="left:706.30px;top:1244.60px;width:83.30px;height:35.70px;background:#1f232b;border:1px solid #30343c;border-radius:6px;"></div>
<div class="t" style="left:719.00px;top:1254.86px;font-size:16px;line-height:16px;color:#e5e7eb;font-weight:400;font-family:'Liberation Sans', sans-serif;">20</div>
<svg class="b" style="left:761.50px;top:1258.00px;" width="15" height="9" viewBox="0 0 15 9" fill="none"><path d="M1 1l6.5 6.5L14 1" stroke="#9ca3af" stroke-width="1.6" stroke-linecap="round" stroke-linejoin="round"/></svg>
<div class="b" style="left:0.00px;top:1315.40px;width:1276.00px;height:1.00px;background:#2a2e36;"></div>
<div class="t" style="left:24.20px;top:1328.29px;font-size:11px;line-height:11px;color:#5596dc;font-weight:400;font-family:'Liberation Mono', monospace;">TurfOps.run vab35f33e</div>
<div class="t" style="left:652.00px;width:600px;text-align:right;top:1327.04px;font-size:12px;line-height:12px;color:#4b5563;font-weight:400;font-family:'Liberation Sans', sans-serif;">18 Feb 2026, 08:16 am</div>
<svg class="b" style="left:0.00px;top:0.00px;" width="8" height="8" viewBox="0 0 16 16" fill="none"><path d="M0 0H14A14 14 0 0 0 0 14Z" fill="#120e26"/><path d="M1 14A13 13 0 0 1 14 1" stroke="#7aa5ff" stroke-width="2"/><path d="M2.6 14A11.4 11.4 0 0 1 14 2.6" stroke="rgba(0,0,0,.5)" stroke-width="1"/></svg>
<svg class="b" style="left:1268.00px;top:0.00px;transform:rotate(90deg);" width="8" height="8" viewBox="0 0 16 16" fill="none"><path d="M0 0H14A14 14 0 0 0 0 14Z" fill="#120e26"/><path d="M1 14A13 13 0 0 1 14 1" stroke="#7aa5ff" stroke-width="2"/><path d="M2.6 14A11.4 11.4 0 0 1 14 2.6" stroke="rgba(0,0,0,.5)" stroke-width="1"/></svg>
<svg class="b" style="left:1268.00px;top:1402.00px;transform:rotate(180deg);" width="8" height="8" viewBox="0 0 16 16" fill="none"><path d="M0 0H14A14 14 0 0 0 0 14Z" fill="#120e26"/><path d="M1 14A13 13 0 0 1 14 1" stroke="#7aa5ff" stroke-width="2"/><path d="M2.6 14A11.4 11.4 0 0 1 14 2.6" stroke="rgba(0,0,0,.5)" stroke-width="1"/></svg>
<svg class="b" style="left:0.00px;top:1402.00px;transform:rotate(270deg);" width="8" height="8" viewBox="0 0 16 16" fill="none"><path d="M0 0H14A14 14 0 0 0 0 14Z" fill="#120e26"/><path d="M1 14A13 13 0 0 1 14 1" stroke="#7aa5ff" stroke-width="2"/><path d="M2.6 14A11.4 11.4 0 0 1 14 2.6" stroke="rgba(0,0,0,.5)" stroke-width="1"/></svg>
</body></html>
